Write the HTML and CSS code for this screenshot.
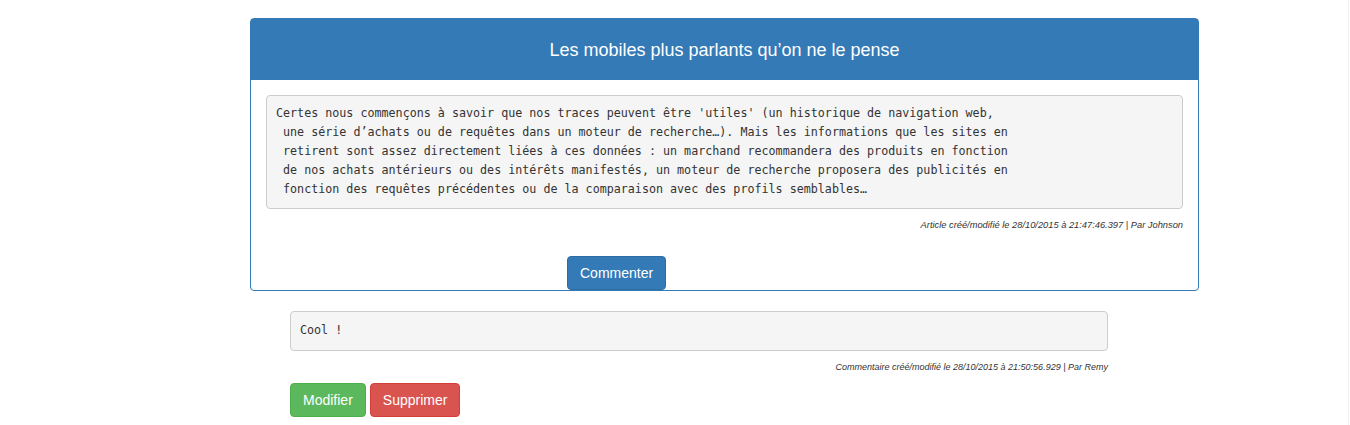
FILE: index.html
```html
<!DOCTYPE html>
<html lang="fr">
<head>
<meta charset="utf-8">
<title>Article</title>
<link rel="stylesheet" href="styles.css">
</head>
<body>
<div class="page">
  <div class="panel">
    <div class="panel-heading">
      <h3 class="panel-title">Les mobiles plus parlants qu’on ne le pense</h3>
    </div>
    <div class="panel-body">
<pre class="content">Certes nous commençons à savoir que nos traces peuvent être 'utiles' (un historique de navigation web,
 une série d’achats ou de requêtes dans un moteur de recherche…). Mais les informations que les sites en
 retirent sont assez directement liées à ces données : un marchand recommandera des produits en fonction
 de nos achats antérieurs ou des intérêts manifestés, un moteur de recherche proposera des publicités en
 fonction des requêtes précédentes ou de la comparaison avec des profils semblables…</pre>
      <p class="meta">Article créé/modifié le 28/10/2015 à 21:47:46.397 | Par Johnson</p>
      <div class="comment-action">
        <button class="btn btn-primary">Commenter</button>
      </div>
    </div>
  </div>

  <div class="comment">
<pre class="content">Cool !</pre>
    <p class="meta">Commentaire créé/modifié le 28/10/2015 à 21:50:56.929 | Par Remy</p>
    <div class="actions">
      <button class="btn btn-success">Modifier</button>
      <button class="btn btn-danger">Supprimer</button>
    </div>
  </div>
</div>
</body>
</html>
```
FILE: styles.css
```css
html, body {
  margin: 0;
  padding: 0;
  background: #fff;
}
body {
  font-family: "Liberation Sans", Arial, Helvetica, sans-serif;
  font-size: 14px;
  color: #333;
}
.page {
  width: 1349px;
  min-height: 425px;
  box-sizing: border-box;
  border-right: 1px solid #f0f0f0;
  padding-top: 18px;
}
.panel {
  margin-left: 250px;
  width: 949px;
  box-sizing: border-box;
  border: 1px solid #337ab7;
  border-radius: 4px;
  background: #fff;
}
.panel-heading {
  background: #337ab7;
  height: 61px;
  display: flex;
  align-items: center;
  justify-content: center;
}
.panel-title {
  margin: 0;
  color: #fff;
  font-size: 18px;
  font-weight: normal;
  line-height: 20px;
  padding-top: 1px;
}
.panel-body {
  padding: 15px 15px 0 15px;
}
.content {
  margin: 0;
  padding: 8px 9px 9px 9px;
  background: #f5f5f5;
  border: 1px solid #ccc;
  border-radius: 4px;
  font-family: "DejaVu Sans Mono", "Liberation Mono", monospace;
  font-size: 11.7px;
  line-height: 19px;
  color: #333;
  white-space: pre;
}
.meta {
  margin: 10px 0 0 0;
  text-align: right;
  font-style: italic;
  font-size: 9.3px;
  line-height: 13px;
  color: #333;
}
.comment .meta {
  font-size: 9px;
}
.comment-action {
  margin-top: 24px;
  padding-left: 301px;
  line-height: 0;
}
.btn {
  display: inline-block;
  font-family: "Liberation Sans", Arial, Helvetica, sans-serif;
  font-size: 14px;
  line-height: 20px;
  padding: 6px 12px;
  border: 1px solid transparent;
  border-radius: 4px;
  color: #fff;
  cursor: pointer;
  vertical-align: top;
}
.btn-primary {
  background: #337ab7;
  border-color: #2e6da4;
}
.btn-success {
  background: #5cb85c;
  border-color: #4cae4c;
}
.btn-danger {
  background: #d9534f;
  border-color: #d43f3a;
}
.comment {
  margin-left: 290px;
  width: 818px;
  margin-top: 20px;
}
.comment .content {
  padding-top: 9px;
  padding-bottom: 10px;
}
.actions {
  margin-top: 9px;
  font-size: 0;
}
.actions .btn + .btn {
  margin-left: 4px;
}
```
